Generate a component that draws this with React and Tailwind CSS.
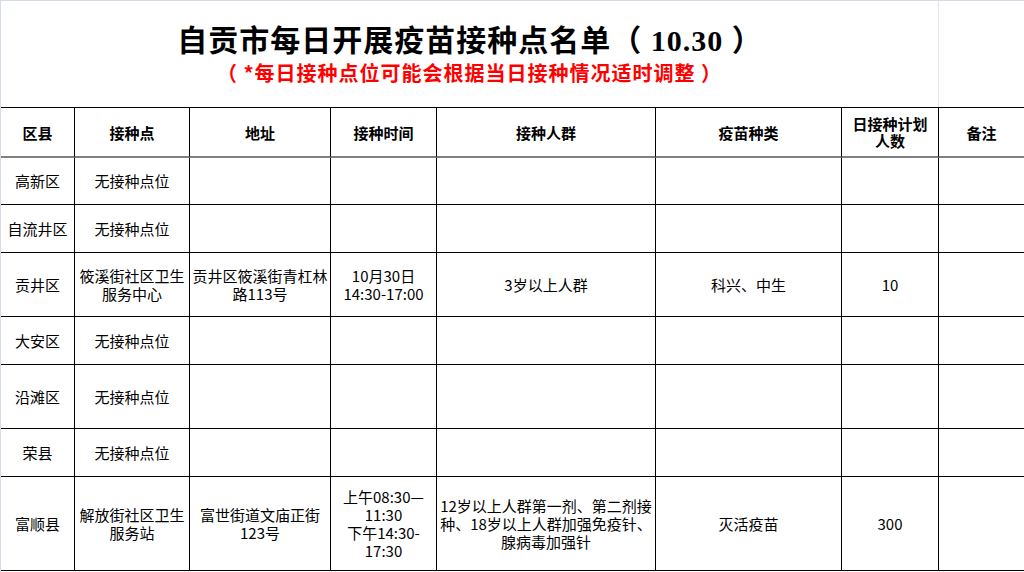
import React from 'react';

const headers = ['区县', '接种点', '地址', '接种时间', '接种人群', '疫苗种类', ['日接种计划', '人数'], '备注'];

const rows = [
  ['高新区', '无接种点位', '', '', '', '', '', ''],
  ['自流井区', '无接种点位', '', '', '', '', '', ''],
  ['贡井区', ['筱溪街社区卫生', '服务中心'], ['贡井区筱溪街青杠林', '路113号'], ['10月30日', '14:30-17:00'], '3岁以上人群', '科兴、中生', '10', ''],
  ['大安区', '无接种点位', '', '', '', '', '', ''],
  ['沿滩区', '无接种点位', '', '', '', '', '', ''],
  ['荣县', '无接种点位', '', '', '', '', '', ''],
  [
    '富顺县',
    ['解放街社区卫生', '服务站'],
    ['富世街道文庙正街', '123号'],
    ['上午08:30—', '11:30', '下午14:30-', '17:30'],
    ['12岁以上人群第一剂、第二剂接', '种、18岁以上人群加强免疫针、', '腺病毒加强针'],
    '灭活疫苗',
    '300',
    '',
  ],
];

const Lines = ({ value }) => {
  const lines = Array.isArray(value) ? value : [value];
  return (
    <div>
      {lines.map((line, i) => (
        <div key={i}>{line}</div>
      ))}
    </div>
  );
};

const App = () => {
  return (
    <div className="w-[1024px] h-[572px] overflow-hidden bg-white border-l border-t border-[#d4dbe6] font-['Noto_Sans_CJK_SC',sans-serif] text-black">
      {/* title block */}
      <div className="flex h-[106px]">
        <div className="w-[938px] border-r border-[#dfe4ee] flex flex-col items-center pt-[25px]">
          <div className="font-['Liberation_Serif','Noto_Sans_CJK_SC',serif] font-bold text-[30px] leading-[30px] tracking-[1px] pl-[1px]">
            自贡市每日开展疫苗接种点名单（ 10.30 ）
          </div>
          <div className="mt-[7px] font-bold text-[20px] leading-[20px] tracking-[1px] text-[#ff0000]">
            （ *每日接种点位可能会根据当日接种情况适时调整 ）
          </div>
        </div>
        <div className="flex-1" />
      </div>

      {/* table */}
      <div className="grid grid-cols-[74px_115px_141px_106px_219px_186px_97px_85px] grid-rows-[50px_47px_48px_64px_48px_64px_48px_94px] border-t border-black">
        {headers.map((h, i) => (
          <div
            key={`h${i}`}
            className={`flex items-center justify-center text-center font-bold text-[15px] leading-[17px] whitespace-nowrap border-b-2 border-b-[#808080] ${
              i < 7 ? 'border-r border-r-black' : ''
            }`}
          >
            <Lines value={h} />
          </div>
        ))}
        {rows.map((row, r) =>
          row.map((cell, c) => (
            <div
              key={`${r}-${c}`}
              className={`flex items-center justify-center text-center text-[15px] leading-[18px] whitespace-nowrap overflow-hidden border-b border-black ${
                c < 7 ? 'border-r' : ''
              }`}
            >
              <Lines value={cell} />
            </div>
          ))
        )}
      </div>
    </div>
  );
};

export default App;
